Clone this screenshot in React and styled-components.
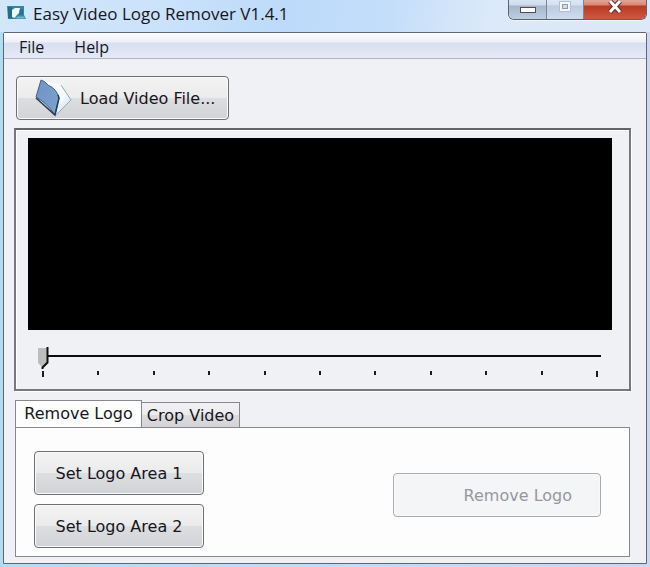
import { useEffect, useState } from "react";
import styled, { createGlobalStyle } from "styled-components";

const GlobalStyle = createGlobalStyle`
  * {
    box-sizing: border-box;
  }
  body {
    margin: 0;
    background: #bcd6f2;
  }
  button, input {
    font-family: inherit;
    margin: 0;
  }
`;

const Window = styled.div`
  min-height: 100vh;
  display: flex;
  flex-direction: column;
  padding: 0 3px 3px;
  font-family: 'DejaVu Sans', sans-serif;
  color: #16161c;
  background:
    linear-gradient(100deg, #d3e7fa 0%, #cbe2fb 25%, #bcdafa 44%, #c4defa 60%, #dbe9f9 75%, #dde8f8 100%) top / 100% 32px no-repeat,
    linear-gradient(90deg, #b4dcf0, #c3dcf5 50%, #ccd8ef);
`;

const TitleBar = styled.header`
  height: 32px;
  display: flex;
  justify-content: space-between;
  align-items: flex-start;
  padding: 0 0 0 4px;
`;

const Title = styled.h1`
  display: flex;
  align-items: center;
  gap: 7px;
  height: 26px;
  margin: 0;
  font-family: 'Open Sans', 'Noto Sans', sans-serif;
  font-size: 17px;
  font-weight: 400;
`;

const Controls = styled.div`
  display: flex;
  height: 20px;
  border: 1px solid #59636f;
  border-top: 0;
  border-radius: 0 0 6px 6px;
  overflow: hidden;
  box-shadow: 0 1px 0 #eef5fc;
`;

const ControlButton = styled.button`
  width: ${({ $close }) => ($close ? "63px" : "37px")};
  display: flex;
  justify-content: center;
  align-items: flex-start;
  padding: 0;
  border: 0;
  border-left: ${({ $first }) => ($first ? "0" : "1px solid #7c8796")};
  background: ${({ $close, $faded }) =>
    $close
      ? "linear-gradient(#e2a596 0, #d98673 5px, #b93a25 6px, #cf5840 100%)"
      : $faded
        ? "linear-gradient(#dce8f6 0, #d3e0f0 5px, #bccbe0 6px, #cfdcee 100%)"
        : "linear-gradient(#d8e4f2 0, #cddbeb 5px, #a5b6cb 6px, #bfcfe2 100%)"};
`;

const Frame = styled.main`
  flex: 1;
  display: flex;
  flex-direction: column;
  border: 1px solid #5b6676;
  border-radius: 2px 2px 0 0;
  background: #f0f1f5;
`;

const MenuBar = styled.nav`
  display: flex;
  height: 26px;
  padding-left: 5px;
  border-bottom: 1px solid #b0b5c0;
  background: linear-gradient(#fbfcff 0, #eef0fa 9px, #dadff0 10px, #e5eaf8 100%);
`;

const MenuItem = styled.button`
  padding: 3px 10px 0;
  margin-right: 10px;
  border: 0;
  background: none;
  color: inherit;
  font-size: 16px;
  line-height: 22px;
  && {
    font-family: 'Open Sans', 'Noto Sans', sans-serif;
  }
`;

const Client = styled.div`
  flex: 1;
  display: flex;
  flex-direction: column;
  padding: 17px 15px 6px 10px;
`;

const PushButton = styled.button`
  display: flex;
  align-items: center;
  justify-content: center;
  gap: 8px;
  height: 44px;
  width: ${({ $width }) => $width};
  padding: 0;
  border: 1px solid #6e6f73;
  border-radius: 4px;
  box-shadow: inset 0 0 0 1px #fafafb;
  background: linear-gradient(#f3f3f4 0, #ebebec 50%, #dddee0 51%, #d2d3d6 100%);
  color: inherit;
  font-size: 16px;
  &:disabled {
    justify-content: flex-end;
    padding-right: 28px;
    border-color: #a9abb0;
    background: #f4f5f7;
    color: #96979d;
  }
`;

const LoadButton = styled(PushButton)`
  justify-content: flex-start;
  padding-left: 18px;
`;

const LoadRow = styled.div`
  display: flex;
  padding-left: 2px;
  margin-bottom: 8px;
`;

const Preview = styled.section`
  border: 2px solid #77787d;
  border-top-color: #63646a;
  box-shadow: inset 1px 1px 0 #fff, 1px 1px 0 #fff;
  padding: 8px 17px 11px 12px;
  display: flex;
  flex-direction: column;
`;

const Screen = styled.div`
  height: 192px;
  background: #000;
`;

const Seek = styled.div`
  margin: 16px 11px 0 10px;
`;

const thumb = encodeURIComponent(
  `<svg xmlns="http://www.w3.org/2000/svg" width="11" height="24"><path d="M0 2H9V17L4 21L0 17Z" fill="#bcbdbd"/><path d="M9.500 1V16.500L4.500 21.500V23" fill="none" stroke="#111" stroke-width="2"/></svg>`
);

const SeekInput = styled.input`
  display: block;
  appearance: none;
  width: 100%;
  height: 24px;
  background: linear-gradient(#0c0c10, #0c0c10) 0 9px / 100% 2px no-repeat;
  &::-webkit-slider-thumb {
    appearance: none;
    width: 11px;
    height: 24px;
    border: 0;
    background: url("data:image/svg+xml,${thumb}") no-repeat;
  }
`;

const Ticks = styled.div`
  display: flex;
  justify-content: space-between;
  height: 7px;
  margin-top: 1px;
  padding: 0 3px 0 4px;
`;

const Tick = styled.span`
  width: 2px;
  height: ${({ $end }) => ($end ? "6px" : "4px")};
  background: #1b1b20;
`;

const TabList = styled.div`
  display: flex;
  align-items: flex-end;
  margin: 9px 0 0 1px;
`;

const Tab = styled.button`
  height: ${({ $active }) => ($active ? "28px" : "25px")};
  width: ${({ $active }) => ($active ? "127px" : "98px")};
  margin-bottom: ${({ $active }) => ($active ? "-1px" : "0")};
  padding: ${({ $active }) => ($active ? "0 0 2px" : "0")};
  border: 1px solid #86888e;
  border-bottom: 0;
  background: ${({ $active }) => ($active ? "#fdfdfe" : "linear-gradient(#f2f2f4 0, #ebebee 50%, #dcdce0 51%, #d4d4d9 100%)")};
  color: inherit;
  font-size: 16px;
  white-space: nowrap;
  & + & {
    border-left: 0;
  }
`;

const TabPanel = styled.section`
  flex: 1;
  display: flex;
  justify-content: space-between;
  align-items: flex-start;
  margin: 0 1px;
  padding: 23px 28px 8px 18px;
  border: 1px solid #86888e;
  background: #fdfdfe;
`;

const AreaButtons = styled.div`
  display: flex;
  flex-direction: column;
  gap: 9px;
`;

const RemoveSlot = styled.div`
  padding-top: 22px;
`;

const AppIcon = () => (
  <svg width="19" height="14" viewBox="0 0 19 14" aria-hidden="true">
    <path d="M0 0H17V9L19 13H1Z" fill="#2f86a8" />
    <path d="M1 1H5V12H1Z" fill="#236b8c" />
    <path d="M5 4L8 2H13L12 7L9 10L8 12L5 11Z" fill="#eef9fc" />
    <path d="M13 3H16V9H12Z" fill="#2c718e" />
    <path d="M10 10.500H17L18 12.500H9Z" fill="#6fb9d2" />
  </svg>
);

const FolderIcon = () => (
  <svg width="37" height="38" viewBox="0 0 37 38" aria-hidden="true">
    <defs>
      <linearGradient id="cover" x1="0" y1="0" x2="1" y2="1">
        <stop offset="0" stopColor="#6f93c2" />
        <stop offset="1" stopColor="#7fa3d0" />
      </linearGradient>
      <linearGradient id="pages" x1="0" y1="0" x2="1" y2="1">
        <stop offset="0" stopColor="#ffffff" />
        <stop offset="0.600" stopColor="#f3f9fe" />
        <stop offset="1" stopColor="#bcd3e6" />
      </linearGradient>
    </defs>
    <path d="M8 2L25 5L36 21L20 37L20 16Z" fill="url(#pages)" />
    <path d="M26 6L36 21L21 36" fill="none" stroke="#8fa9bd" strokeWidth="1" />
    <path d="M6 1Q10 2 13 6Q22 10 24 19L20 36Q12 24 1 18Z" fill="url(#cover)" stroke="#3f5f8b" strokeWidth="1" />
    <path d="M23 16L24 19L20 36L1 19" fill="none" stroke="#243b59" strokeWidth="1.500" />
  </svg>
);

const App = () => {
  const [position, setPosition] = useState(0);
  const [tab, setTab] = useState("remove");

  useEffect(() => {
    document.title = "Easy Video Logo Remover V1.4.1";
  }, []);

  return (
    <Window>
      <GlobalStyle />
      <TitleBar>
        <Title>
          <AppIcon />
          Easy Video Logo Remover V1.4.1
        </Title>
        <Controls>
          <ControlButton type="button" aria-label="Minimize" $first>
            <svg width="18" height="14" aria-hidden="true">
              <rect x="1.500" y="7.500" width="15" height="5" fill="#fff" stroke="#4a5058" />
            </svg>
          </ControlButton>
          <ControlButton type="button" aria-label="Maximize" $faded>
            <svg width="14" height="14" aria-hidden="true">
              <rect x="1.500" y="1.500" width="11" height="10" fill="#f4f8fc" stroke="#b3bfce" />
              <rect x="4.500" y="4.500" width="5" height="4" fill="#cfdcec" stroke="#8f9bac" />
            </svg>
          </ControlButton>
          <ControlButton type="button" aria-label="Close" $close>
            <svg width="16" height="14" aria-hidden="true">
              <path d="M3 1L13 12M13 1L3 12" stroke="#553338" strokeWidth="5" />
              <path d="M3 1L13 12M13 1L3 12" stroke="#fff" strokeWidth="3" />
            </svg>
          </ControlButton>
        </Controls>
      </TitleBar>
      <Frame>
        <MenuBar>
          <MenuItem type="button">File</MenuItem>
          <MenuItem type="button">Help</MenuItem>
        </MenuBar>
        <Client>
          <LoadRow>
            <LoadButton type="button" $width="213px">
              <FolderIcon />
              Load Video File...
            </LoadButton>
          </LoadRow>
          <Preview>
            <Screen />
            <Seek>
              <SeekInput
                type="range"
                aria-label="Video position"
                min="0"
                max="100"
                value={position}
                onChange={(e) => setPosition(Number(e.target.value))}
              />
              <Ticks>
                {Array.from({ length: 11 }, (_, i) => (
                  <Tick key={i} $end={i === 0 || i === 10} />
                ))}
              </Ticks>
            </Seek>
          </Preview>
          <TabList role="tablist">
            <Tab type="button" role="tab" aria-selected={tab === "remove"} $active={tab === "remove"} onClick={() => setTab("remove")}>
              Remove Logo
            </Tab>
            <Tab type="button" role="tab" aria-selected={tab === "crop"} $active={tab === "crop"} onClick={() => setTab("crop")}>
              Crop Video
            </Tab>
          </TabList>
          <TabPanel role="tabpanel">
            {tab === "remove" && (
              <>
                <AreaButtons>
                  <PushButton type="button" $width="170px">Set Logo Area 1</PushButton>
                  <PushButton type="button" $width="170px">Set Logo Area 2</PushButton>
                </AreaButtons>
                <RemoveSlot>
                  <PushButton type="button" $width="208px" disabled>Remove Logo</PushButton>
                </RemoveSlot>
              </>
            )}
          </TabPanel>
        </Client>
      </Frame>
    </Window>
  );
};

export default App;
